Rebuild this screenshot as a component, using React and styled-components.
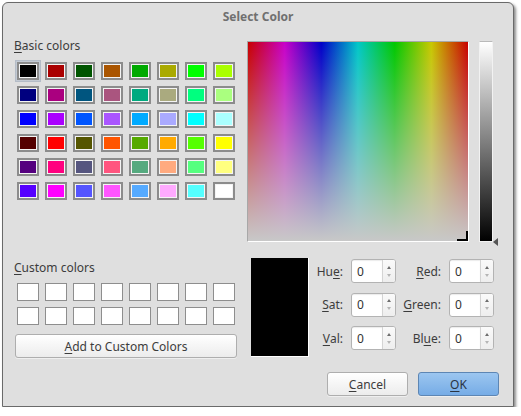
import React from 'react'
import styled, { createGlobalStyle } from 'styled-components'

const GlobalStyle = createGlobalStyle`
  html, body {
    margin: 0;
    padding: 0;
    background: #ffffff;
  }
  body {
    font-family: "Noto Sans", "DejaVu Sans", sans-serif;
    font-size: 12px;
    color: #3c3c3c;
  }
  u {
    text-decoration: underline;
    text-underline-offset: 2px;
  }
`

const basicColors = [
  '#000000', '#aa0000', '#005500', '#aa5500', '#00aa00', '#aaaa00', '#00ff00', '#aaff00',
  '#00007f', '#aa007f', '#00557f', '#aa557f', '#00aa7f', '#aaaa7f', '#00ff7f', '#aaff7f',
  '#0000ff', '#aa00ff', '#0055ff', '#aa55ff', '#00aaff', '#aaaaff', '#00ffff', '#aaffff',
  '#550000', '#ff0000', '#555500', '#ff5500', '#55aa00', '#ffaa00', '#55ff00', '#ffff00',
  '#55007f', '#ff007f', '#55557f', '#ff557f', '#55aa7f', '#ffaa7f', '#55ff7f', '#ffff7f',
  '#5500ff', '#ff00ff', '#5555ff', '#ff55ff', '#55aaff', '#ffaaff', '#55ffff', '#ffffff',
]

const Window = styled.div`
  box-sizing: border-box;
  margin: 2px 0 0 2px;
  width: 512px;
  height: 405px;
  background: #dfdfdf;
  border: 1px solid #6a6a6a;
  border-radius: 6px 6px 0 0;
  box-shadow: 2px 2px 3px rgba(0, 0, 0, 0.45);
  display: flex;
  flex-direction: column;
`

const TitleBar = styled.div`
  height: 27px;
  display: flex;
  align-items: center;
  justify-content: center;
  font-weight: bold;
  color: #707070;
  font-size: 12px;
`

const Body = styled.div`
  display: grid;
  grid-template-columns: 223px 252px;
  column-gap: 10px;
  padding-left: 11px;
`

const LeftColumn = styled.div`
  display: flex;
  flex-direction: column;
`

const SectionLabel = styled.div`
  height: 14px;
  line-height: 14px;
  margin-top: ${p => p.$top}px;
  color: #3c3c3c;
`

const SwatchGrid = styled.div`
  display: grid;
  grid-template-columns: repeat(8, 28px);
  grid-auto-rows: 24px;
  margin-top: ${p => p.$top}px;
`

const Cell = styled.div`
  display: flex;
  align-items: center;
  justify-content: center;
  position: relative;
  &::before {
    content: '';
    display: ${p => (p.$selected ? 'block' : 'none')};
    position: absolute;
    left: 1px;
    top: 1px;
    right: 1px;
    bottom: 1px;
    background: #c3cad3;
    border: 1px solid #b4bcc7;
    box-sizing: border-box;
  }
`

const Swatch = styled.div`
  position: relative;
  box-sizing: border-box;
  width: 22px;
  height: 18px;
  background: ${p => p.$color};
  border: 2px solid #8c8c8c;
  box-shadow: inset 0 0 0 1px #f4f4f4;
`

const CustomBox = styled.div`
  box-sizing: border-box;
  width: 22px;
  height: 18px;
  background: #ffffff;
  border: 1px solid #8e8e8e;
`

const Button = styled.button`
  box-sizing: border-box;
  height: 24px;
  width: ${p => p.$width || 'auto'};
  margin: ${p => p.$margin || '0'};
  font-family: inherit;
  font-size: 12px;
  color: ${p => (p.$primary ? '#2a3442' : '#3c3c3c')};
  border-radius: 3px;
  border: 1px solid ${p => (p.$primary ? '#5d86b4' : '#aeaeae')};
  background: ${p =>
    p.$primary
      ? 'linear-gradient(to bottom, #9cc6f0, #76ace6)'
      : 'linear-gradient(to bottom, #ffffff, #ececec)'};
  box-shadow: 0 1px 0 rgba(255, 255, 255, 0.5);
  padding: 0;
  cursor: pointer;
`

const RightColumn = styled.div`
  display: flex;
  flex-direction: column;
`

const PickerRow = styled.div`
  display: flex;
  margin-top: 11px;
  height: 201px;
`

const Spectrum = styled.div`
  position: relative;
  box-sizing: border-box;
  width: 222px;
  height: 201px;
  border-top: 1px solid #a8a8a8;
  border-left: 1px solid #a8a8a8;
  border-right: 1px solid #ffffff;
  border-bottom: 1px solid #ffffff;
  background:
    linear-gradient(to bottom, rgba(200, 200, 200, 0), rgb(200, 200, 200)),
    linear-gradient(
      to right,
      #c80000 0%,
      #c800c8 16.667%,
      #0000c8 33.333%,
      #00c8c8 50%,
      #00c800 66.667%,
      #c8c800 83.333%,
      #c80000 100%
    );
`

const CrossH = styled.span`
  position: absolute;
  right: 0;
  bottom: 0;
  width: 11px;
  height: 2px;
  background: #000;
`

const CrossV = styled.span`
  position: absolute;
  right: 0;
  bottom: 0;
  width: 2px;
  height: 10px;
  background: #000;
`

const Luminance = styled.div`
  box-sizing: border-box;
  width: 14px;
  height: 201px;
  margin-left: 10px;
  border: 1px solid #f2f2f2;
  border-top-color: #b9b9b9;
  background: linear-gradient(to bottom, #ffffff, #000000);
`

const LumArrow = styled.div`
  align-self: flex-end;
  margin-bottom: -4px;
  width: 0;
  height: 0;
  border-top: 4px solid transparent;
  border-bottom: 4px solid transparent;
  border-right: 5px solid #555555;
`

const LowerRow = styled.div`
  display: flex;
  margin-top: 16px;
`

const Preview = styled.div`
  box-sizing: border-box;
  width: 58px;
  height: 99px;
  margin-left: 4px;
  background: #000;
  border-right: 1px solid #ffffff;
  border-bottom: 1px solid #ffffff;
`

const SpinGrid = styled.div`
  display: grid;
  grid-template-columns: 34px 45px 37px 45px;
  grid-auto-rows: 24px;
  column-gap: 8px;
  row-gap: 9.5px;
  margin-top: 1px;
`

const SpinLabel = styled.div`
  display: flex;
  align-items: center;
  justify-content: flex-end;
  color: #3c3c3c;
  white-space: nowrap;
`

const Spin = styled.div`
  display: flex;
  box-sizing: border-box;
  height: 24px;
  width: 45px;
  border: 1px solid #b3b3b3;
  border-radius: 3px;
  background: #ffffff;
  overflow: hidden;
`

const SpinField = styled.div`
  flex: 1;
  display: flex;
  align-items: center;
  padding-left: 5px;
  box-shadow: inset 0 1px 1px rgba(0, 0, 0, 0.08);
  color: #333;
`

const SpinArrows = styled.div`
  width: 12px;
  border-left: 1px solid #d4d4d4;
  background: linear-gradient(to bottom, #fafafa, #eeeeee);
  display: flex;
  flex-direction: column;
  align-items: center;
  justify-content: space-around;
  padding: 3px 0;
`

const Tri = styled.span`
  width: 0;
  height: 0;
  border-left: 2.5px solid transparent;
  border-right: 2.5px solid transparent;
  ${p =>
    p.$down
      ? 'border-top: 3px solid #b5b5b5;'
      : 'border-bottom: 3px solid #6d6d6d;'}
`

const ButtonRow = styled.div`
  display: flex;
  justify-content: flex-end;
  gap: 10px;
  margin-top: 15px;
`

function SpinBox() {
  return (
    <Spin>
      <SpinField>0</SpinField>
      <SpinArrows>
        <Tri />
        <Tri $down />
      </SpinArrows>
    </Spin>
  )
}

export default function App() {
  const spins = [
    [<>Hu<u>e</u>:</>, <><u>R</u>ed:</>],
    [<><u>S</u>at:</>, <><u>G</u>reen:</>],
    [<><u>V</u>al:</>, <>Bl<u>u</u>e:</>],
  ]
  return (
    <>
      <GlobalStyle />
      <Window>
        <TitleBar>Select Color</TitleBar>
        <Body>
          <LeftColumn>
            <SectionLabel $top={9}><u>B</u>asic colors</SectionLabel>
            <SwatchGrid $top={6}>
              {basicColors.map((c, i) => (
                <Cell key={i} $selected={i === 0}>
                  <Swatch $color={c} />
                </Cell>
              ))}
            </SwatchGrid>
            <SectionLabel $top={58}><u>C</u>ustom colors</SectionLabel>
            <SwatchGrid $top={5}>
              {Array.from({ length: 16 }).map((_, i) => (
                <Cell key={i}>
                  <CustomBox />
                </Cell>
              ))}
            </SwatchGrid>
            <Button $width="222px" $margin="6px 0 0 1px">
              <u>A</u>dd to Custom Colors
            </Button>
          </LeftColumn>
          <RightColumn>
            <PickerRow>
              <Spectrum>
                <CrossH />
                <CrossV />
              </Spectrum>
              <Luminance />
              <LumArrow />
            </PickerRow>
            <LowerRow>
              <Preview />
              <SpinGrid>
                {spins.map(([a, b], i) => (
                  <React.Fragment key={i}>
                    <SpinLabel>{a}</SpinLabel>
                    <SpinBox />
                    <SpinLabel>{b}</SpinLabel>
                    <SpinBox />
                  </React.Fragment>
                ))}
              </SpinGrid>
            </LowerRow>
            <ButtonRow>
              <Button $width="81px"><u>C</u>ancel</Button>
              <Button $width="81px" $primary><u>O</u>K</Button>
            </ButtonRow>
          </RightColumn>
        </Body>
      </Window>
    </>
  )
}
